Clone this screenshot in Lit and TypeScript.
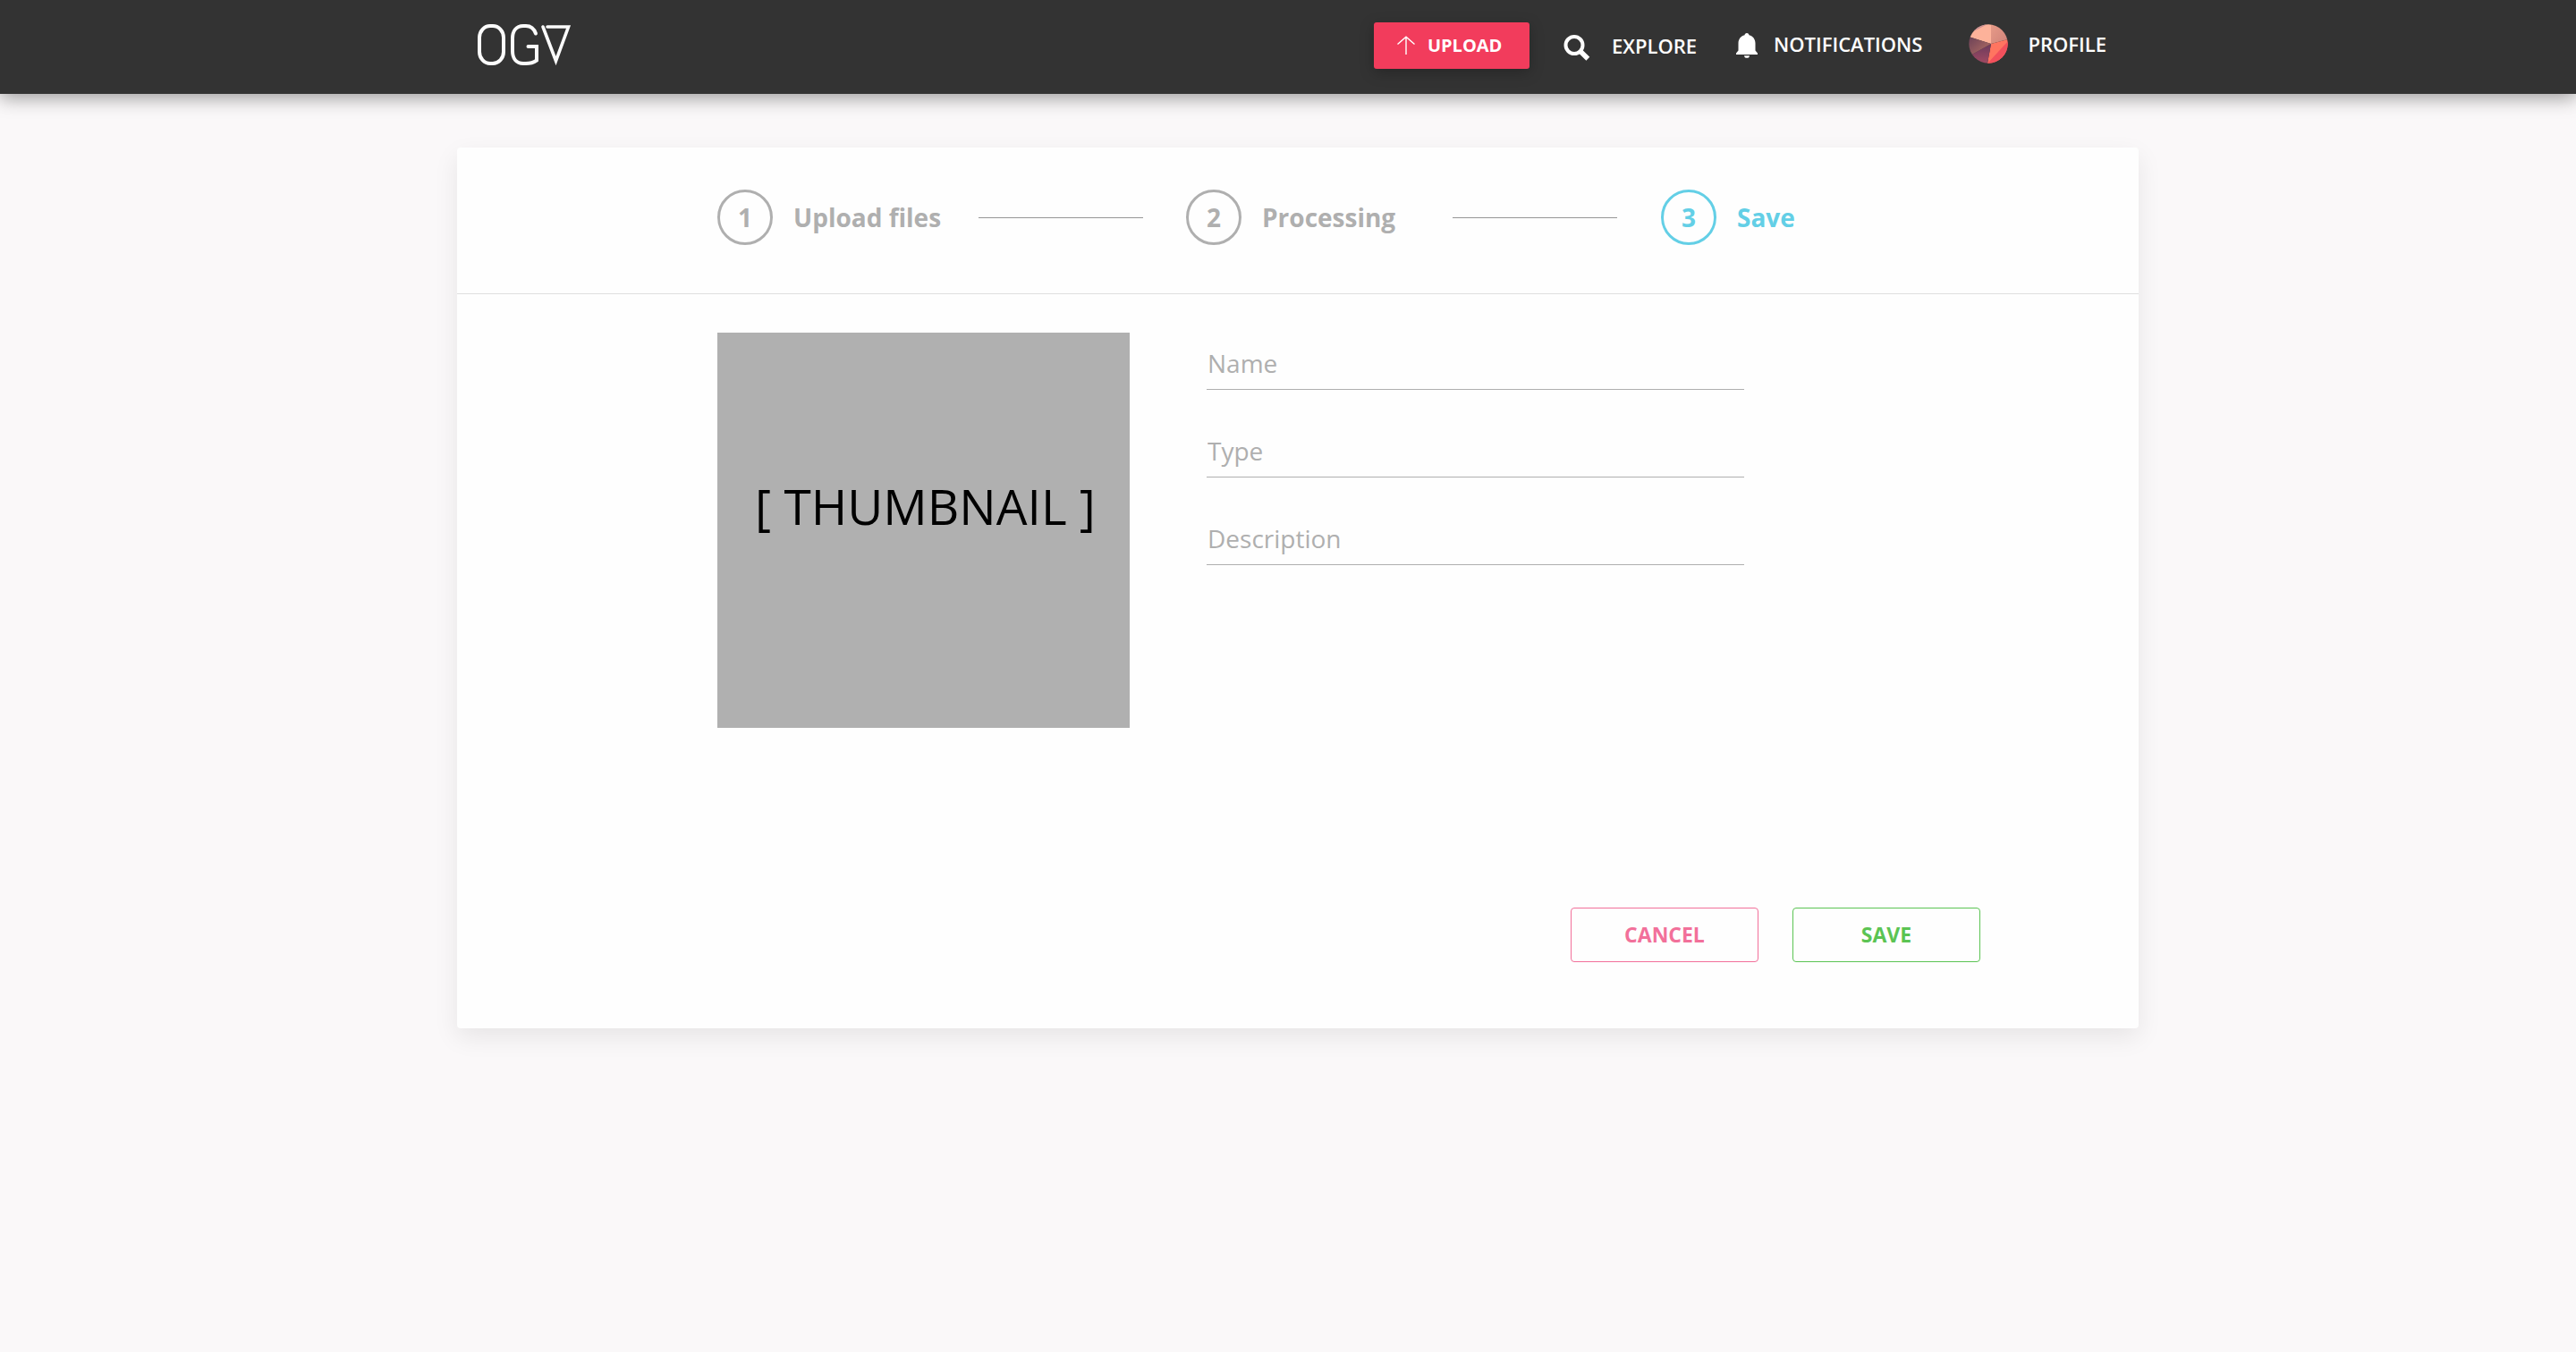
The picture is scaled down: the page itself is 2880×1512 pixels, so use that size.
import { LitElement, html, css, svg } from "lit";
import { customElement, property } from "lit/decorators.js";
import { classMap } from "lit/directives/class-map.js";

const logo = svg`
  <svg class="logo-art" viewBox="0 -1 106 50" width="106" height="50" fill="none" stroke="#fbfbfb"
    stroke-width="4" stroke-linecap="round" stroke-linejoin="miter" aria-hidden="true">
    <rect x="3" y="3" width="27" height="42" rx="12" ry="13"></rect>
    <path d="M66 11.500C64 6 60 3 55 3h-3C44 3 40 9 40 17v14c0 8 4 14 12 14h3c5 0 9-1.500 12-3.500V26h-9.500"></path>
    <path d="M74 4l14.500 38L102.500 4H79" stroke-width="3.600"></path>
  </svg>`;

const arrowIcon = svg`
  <svg viewBox="0 0 20 22" width="20" height="22" fill="none" stroke="#fff" stroke-width="1.400" aria-hidden="true">
    <path d="M10 21V1M0.500 9.500L10 1.200l9.500 8.300"></path>
  </svg>`;

const searchIcon = svg`
  <svg viewBox="0 -4 30 34" width="30" height="34" fill="none" stroke="#fff" aria-hidden="true">
    <circle cx="12" cy="12.500" r="9.500" stroke-width="4"></circle>
    <path d="M18.500 19l8.800 8.800" stroke-width="5.500"></path>
  </svg>`;

const bellIcon = svg`
  <svg viewBox="0 -4 24 32" width="24" height="32" fill="#fff" aria-hidden="true">
    <path d="M12 0c1.500 0 2.400 1 2.500 2.300C19 3.500 21.500 7 21.500 11.500v8L24 22.500V24H0v-1.500l2.500-3v-8C2.500 7 5 3.500 9.500 2.300 9.600 1 10.500 0 12 0z"></path>
    <path d="M9 25.200h6c0 1.600-1.300 2.600-3 2.600s-3-1-3-2.600z"></path>
  </svg>`;

const avatar = svg`
  <svg viewBox="0 0 44 44" width="44" height="44" aria-hidden="true">
    <defs>
      <clipPath id="disc"><circle cx="22" cy="22" r="21.700"></circle></clipPath>
      <linearGradient id="dusk" x1="0" y1="0" x2="1" y2="1">
        <stop offset="0" stop-color="#6b4157"></stop><stop offset="1" stop-color="#b97265"></stop>
      </linearGradient>
      <linearGradient id="rose" x1="0" y1="0" x2="1" y2="1">
        <stop offset="0" stop-color="#e79b88"></stop><stop offset="1" stop-color="#cf8279"></stop>
      </linearGradient>
      <linearGradient id="plum" x1="0" y1="0" x2="0" y2="1">
        <stop offset="0" stop-color="#6a3a5c"></stop><stop offset="1" stop-color="#a04a62"></stop>
      </linearGradient>
    </defs>
    <g clip-path="url(#disc)">
      <path d="M25 22L0 14V0h25z" fill="#fdb29a"></path>
      <path d="M0 11L21 0H0z" fill="#c98f92"></path>
      <path d="M25 22V0h19v17z" fill="url(#rose)"></path>
      <path d="M25 22l19-5v27H21z" fill="#ff7560"></path>
      <path d="M44 19v25H21z" fill="#f2505c"></path>
      <path d="M25 22L21 44H0V36z" fill="url(#plum)"></path>
      <path d="M25 22L0 14v22z" fill="url(#dusk)"></path>
    </g>
  </svg>`;

@customElement("site-header")
export class SiteHeader extends LitElement {
  static styles = css`
    :host {
      display: block;
      position: relative;
      background: #333;
      box-shadow: 0 4px 20px rgba(0, 0, 0, 0.4);
    }
    .bar {
      box-sizing: border-box;
      display: flex;
      align-items: flex-start;
      justify-content: space-between;
      max-width: 1880px;
      min-height: 105px;
      margin: 0 auto;
      padding: 25px 25px 28px 33px;
    }
    .logo,
    .logo-art {
      display: block;
    }
    .nav {
      display: flex;
      align-items: flex-start;
    }
    svg {
      flex: none;
    }
    .upload {
      box-sizing: border-box;
      display: flex;
      align-items: center;
      gap: 14px;
      width: 174px;
      height: 52px;
      margin-right: 38px;
      padding: 0 0 0 26px;
      border: 0;
      border-radius: 3px;
      background: #f23c5c;
      box-shadow: 0 4px 16px rgba(0, 0, 0, 0.25);
      color: #fff;
      font: 700 20px/28px "Open Sans", "Noto Sans", sans-serif;
    }
    .link {
      display: flex;
      align-items: center;
      height: 48px;
      color: #fff;
      font-size: 22px;
      line-height: 30px;
      font-weight: 600;
      text-decoration: none;
    }
    .explore {
      gap: 24px;
      height: 52px;
      margin-right: 44px;
    }
    .notifications {
      gap: 18px;
      margin-right: 52px;
    }
    .profile {
      gap: 22px;
    }
  `;

  render() {
    return html`
      <div class="bar">
        <a class="logo" href="#" aria-label="OGV">${logo}</a>
        <nav class="nav">
          <button class="upload" type="button">${arrowIcon}<span>UPLOAD</span></button>
          <a class="link explore" href="#">${searchIcon}<span>EXPLORE</span></a>
          <a class="link notifications" href="#">${bellIcon}<span>NOTIFICATIONS</span></a>
          <a class="link profile" href="#">${avatar}<span>PROFILE</span></a>
        </nav>
      </div>
    `;
  }
}

@customElement("progress-steps")
export class ProgressSteps extends LitElement {
  @property({ type: Number }) current = 1;

  private labels = ["Upload files", "Processing", "Save"];

  static styles = css`
    :host {
      display: block;
    }
    .steps {
      display: grid;
      grid-template-columns: 292px 232px 298px 233px auto;
      align-items: center;
      justify-content: start;
      margin: 0;
      padding: 47px 0 54px 291px;
      list-style: none;
      border-bottom: 1px solid #e0e0e0;
    }
    .step {
      display: flex;
      align-items: center;
      gap: 23px;
      color: #afafaf;
      font-size: 28px;
      line-height: 38px;
      font-weight: 700;
      white-space: nowrap;
    }
    .number {
      box-sizing: border-box;
      display: flex;
      align-items: center;
      justify-content: center;
      width: 62px;
      height: 62px;
      border: 3px solid currentColor;
      border-radius: 50%;
    }
    .connector {
      width: 184px;
      height: 1px;
      background: #969696;
    }
    .current {
      color: #63cfe6;
    }
  `;

  render() {
    return html`
      <ol class="steps">
        ${this.labels.map(
          (label, i) => html`
            ${i > 0 ? html`<li class="connector" role="presentation"></li>` : null}
            <li class=${classMap({ step: true, current: i + 1 === this.current })}>
              <span class="number">${i + 1}</span><span>${label}</span>
            </li>
          `
        )}
      </ol>
    `;
  }
}

@customElement("app-root")
export class AppRoot extends LitElement {
  static styles = css`
    :host {
      display: block;
      min-height: 100vh;
      background: #faf8f9;
      font-family: "Open Sans", "Noto Sans", sans-serif;
    }
    .page {
      padding: 60px 0 60px 22px;
    }
    .card {
      max-width: 1880px;
      margin: 0 auto;
      border-radius: 4px;
      background: #fefefe;
      box-shadow: 0 10px 28px rgba(0, 0, 0, 0.08);
    }
    .details {
      display: flex;
      align-items: flex-start;
      gap: 86px;
      padding: 43px 177px 0 291px;
    }
    .thumbnail {
      box-sizing: border-box;
      display: flex;
      align-items: center;
      justify-content: center;
      width: 461px;
      height: 442px;
      padding: 0 0 54px 4px;
      background: #b0b0b0;
      color: #000;
      font-size: 55px;
      line-height: 76px;
      white-space: nowrap;
    }
    .fields {
      display: flex;
      flex-direction: column;
      gap: 49px;
      flex: 0 1 601px;
      padding-top: 15px;
    }
    .input {
      box-sizing: border-box;
      width: 100%;
      height: 49px;
      margin: 0;
      padding: 0 0 10px 1px;
      border: 0;
      border-bottom: 1px solid #afafaf;
      border-radius: 0;
      outline: 0;
      background: transparent;
      color: #333;
      font: 400 28px/38px "Open Sans", "Noto Sans", sans-serif;
    }
    .input::placeholder {
      color: #afafaf;
      opacity: 1;
    }
    .actions {
      display: flex;
      justify-content: flex-end;
      gap: 38px;
      padding: 201px 177px 74px 0;
    }
    .button {
      box-sizing: border-box;
      width: 210px;
      height: 61px;
      padding: 0 0 2px;
      border: 1px solid currentColor;
      border-radius: 4px;
      background: transparent;
      font: 700 23px/32px "Open Sans", "Noto Sans", sans-serif;
    }
    .cancel {
      color: #f2709a;
    }
    .save {
      color: #5bc453;
    }
  `;

  render() {
    return html`
      <site-header></site-header>
      <main class="page">
        <form class="card" @submit=${(e: Event) => e.preventDefault()}>
          <progress-steps .current=${3}></progress-steps>
          <div class="details">
            <div class="thumbnail">[ THUMBNAIL ]</div>
            <div class="fields">
              ${["Name", "Type", "Description"].map(
                (name) => html`<input
                  class="input"
                  type="text"
                  name=${name.toLowerCase()}
                  aria-label=${name}
                  placeholder=${name}
                />`
              )}
            </div>
          </div>
          <div class="actions">
            <button class="button cancel" type="button">CANCEL</button>
            <button class="button save" type="submit">SAVE</button>
          </div>
        </form>
      </main>
    `;
  }
}
